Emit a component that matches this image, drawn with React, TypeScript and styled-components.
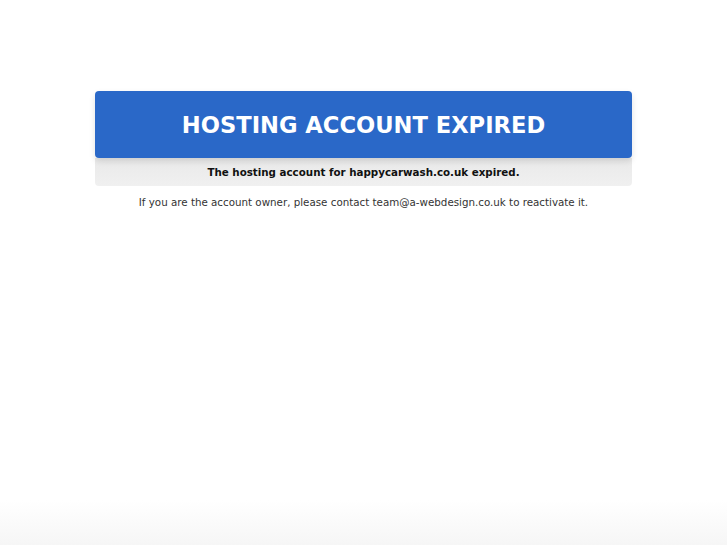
import React from "react";
import styled, { createGlobalStyle } from "styled-components";

const Global = createGlobalStyle`
  html, body { margin: 0; padding: 0; }
  body {
    font-family: "DejaVu Sans", Verdana, sans-serif;
    background: #ffffff;
    min-height: 545px;
  }
`;

const Page = styled.div`
  min-height: 545px;
  display: flex;
  flex-direction: column;
  align-items: center;
  padding-top: 91px;
  box-sizing: border-box;
  background: linear-gradient(to bottom, #ffffff 0px, #ffffff 500px, #f6f6f6 545px);
`;

const Card = styled.div`
  width: 537px;
  display: flex;
  flex-direction: column;
`;

const Banner = styled.div`
  height: 67px;
  background: #2a68c8;
  border-radius: 4px;
  display: flex;
  align-items: center;
  justify-content: center;
  color: #ffffff;
  font-weight: bold;
  font-size: 22.6px;
  box-shadow: 0 3px 6px rgba(0, 0, 0, 0.12);
  position: relative;
  z-index: 1;
`;

const Notice = styled.div`
  height: 28px;
  background: linear-gradient(to bottom, #e9e9e9, #f0f0f0);
  border-radius: 0 0 4px 4px;
  display: flex;
  align-items: center;
  justify-content: center;
  font-size: 10.3px;
  font-weight: bold;
  color: #111;
`;

const Footer = styled.p`
  margin: 10px 0 0;
  font-size: 10.3px;
  color: #333;
  text-align: center;
`;

export default function App() {
  return (
    <>
      <Global />
      <Page>
        <Card>
          <Banner>HOSTING ACCOUNT EXPIRED</Banner>
          <Notice>The hosting account for happycarwash.co.uk expired.</Notice>
        </Card>
        <Footer>
          If you are the account owner, please contact team@a-webdesign.co.uk to reactivate it.
        </Footer>
      </Page>
    </>
  );
}
